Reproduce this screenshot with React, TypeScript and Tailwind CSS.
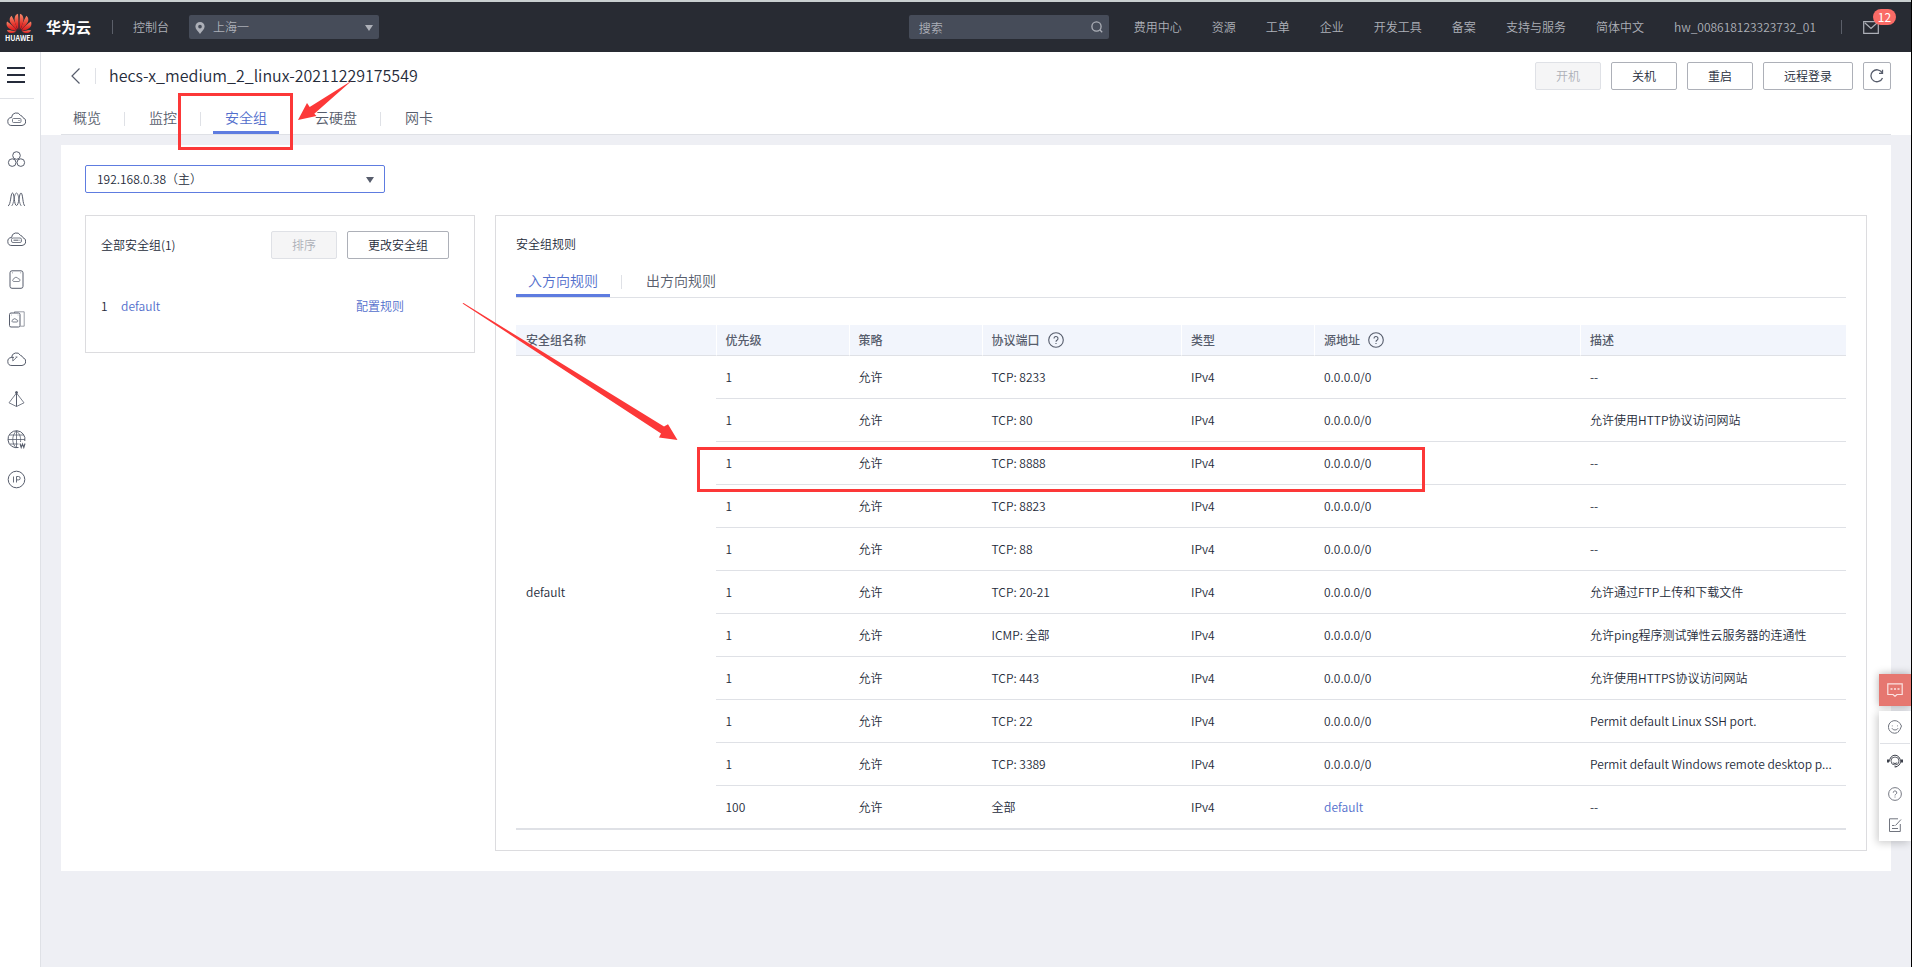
import { useState } from 'react';
import type { ReactNode } from 'react';

interface Rule {
  priority: number;
  port: string;
  source: string;
  description: string;
}

const rules: Rule[] = [
  { priority: 1, port: 'TCP: 8233', source: '0.0.0.0/0', description: '--' },
  { priority: 1, port: 'TCP: 80', source: '0.0.0.0/0', description: '允许使用HTTP协议访问网站' },
  { priority: 1, port: 'TCP: 8888', source: '0.0.0.0/0', description: '--' },
  { priority: 1, port: 'TCP: 8823', source: '0.0.0.0/0', description: '--' },
  { priority: 1, port: 'TCP: 88', source: '0.0.0.0/0', description: '--' },
  { priority: 1, port: 'TCP: 20-21', source: '0.0.0.0/0', description: '允许通过FTP上传和下载文件' },
  { priority: 1, port: 'ICMP: 全部', source: '0.0.0.0/0', description: '允许ping程序测试弹性云服务器的连通性' },
  { priority: 1, port: 'TCP: 443', source: '0.0.0.0/0', description: '允许使用HTTPS协议访问网站' },
  { priority: 1, port: 'TCP: 22', source: '0.0.0.0/0', description: 'Permit default Linux SSH port.' },
  { priority: 1, port: 'TCP: 3389', source: '0.0.0.0/0', description: 'Permit default Windows remote desktop p...' },
  { priority: 100, port: '全部', source: 'default', description: '--' },
];

const navLinks = ['费用中心', '资源', '工单', '企业', '开发工具', '备案', '支持与服务', '简体中文', 'hw_008618123323732_01'];
const pageTabs = ['概览', '监控', '安全组', '云硬盘', '网卡'];
const ruleTabs = ['入方向规则', '出方向规则'];

const cloudPath = 'M5 15.5a4 4 0 0 1-.4-8 4.7 4.7 0 0 1 8.8-2.2 3.8 3.8 0 0 1 2.6 2.4 4 4 0 0 1-1 7.8z';

const services: { name: string; icon: ReactNode }[] = [
  {
    name: '弹性云服务器',
    icon: (
      <>
        <path d={cloudPath} />
        <rect x="5.5" y="8.5" width="8.5" height="4" rx="1" strokeWidth="0.8" />
        <path d="M11.5 10.5h1" />
      </>
    ),
  },
  {
    name: '弹性伸缩',
    icon: (
      <>
        <circle cx="9.5" cy="5.5" r="3.8" />
        <circle cx="5.2" cy="12.6" r="3.8" />
        <circle cx="13.8" cy="12.6" r="3.8" />
      </>
    ),
  },
  {
    name: '镜像服务',
    icon: (
      <>
        <path d="M1 16c3-1 2.5-13 4.5-13S7 15.5 9.5 15.5 12 3 14 3s1.5 12 4 13" />
        <path d="M4.5 16C7 15 7 3 9.5 3s2.5 12 5 13" strokeWidth="0.8" />
      </>
    ),
  },
  {
    name: '裸金属服务器',
    icon: (
      <>
        <path d={cloudPath} />
        <rect x="4.5" y="8" width="10" height="4.5" rx="1.5" strokeWidth="0.8" />
        <path d="M6.5 10.2h5M12.5 10.2h.8" />
      </>
    ),
  },
  {
    name: '云硬盘',
    icon: (
      <>
        <rect x="3" y="0.8" width="13" height="17.5" rx="2" />
        <path d="M6.5 11.5a1.3 1.3 0 0 1 .3-2.5 2.3 2.3 0 0 1 4.4-.2 1.4 1.4 0 0 1 .8 2.7z" strokeWidth="0.7" />
        <path d="M5 2.8h.6M13.5 2.8h.6" />
      </>
    ),
  },
  {
    name: '专属存储',
    icon: (
      <>
        <rect x="2.5" y="3" width="10.5" height="14" rx="1.5" />
        <path d="M7.5 3V1.8h9.7v14.4h-4" strokeWidth="0.6" />
        <path d="M5.5 12a1.1 1.1 0 0 1 .3-2 2 2 0 0 1 3.7-.1 1.1 1.1 0 0 1 .6 2.1zM4.3 5h.5M10.8 5h.5" strokeWidth="0.8" />
      </>
    ),
  },
  {
    name: '云备份',
    icon: (
      <>
        <path d={cloudPath} />
        <path d="M5.8 6.5V11l4-3.8M4.5 7.5h2.5M8.5 7h2" strokeWidth="0.8" />
      </>
    ),
  },
  {
    name: '弹性负载均衡',
    icon: (
      <>
        <path d="M9.5 3 2 12.8l7.5 3.7 7.5-3.7z" strokeWidth="0.8" />
        <path d="M9.5 3v13.5" />
        <circle cx="9.5" cy="2.5" r="1" fill="currentColor" />
      </>
    ),
  },
  {
    name: '域名注册',
    icon: (
      <>
        <path d="M11.5 17.5A8.5 8.5 0 1 1 17.8 11" />
        <path d="M9.5 1c-5 4-5 13 0 17M9.5 1c3.5 3 4.5 6.5 4 11M9.5 1v17M2.5 5h14M1 9.5h17M2.5 14h9" strokeWidth="0.8" />
        <path d="m13 13.5 1.2 4 1.3-3.5 1.3 3.5 1.2-4" strokeWidth="1.1" />
      </>
    ),
  },
  {
    name: '弹性公网IP',
    icon: (
      <>
        <circle cx="9.5" cy="9.5" r="8.3" />
        <path d="M6.5 6.5v6M9.5 12.5v-6h2a1.7 1.7 0 0 1 0 3.4h-2" strokeWidth="0.9" />
      </>
    ),
  },
];

function Triangle({ className }: { className: string }) {
  return (
    <svg viewBox="0 0 8 6" className={`pointer-events-none absolute h-[6px] w-[8px] ${className}`} fill="currentColor">
      <path d="M0 0h8L4 6z" />
    </svg>
  );
}

function HelpIcon({ size = 'h-4 w-4' }: { size?: string }) {
  return (
    <svg viewBox="0 0 16 16" className={`${size} shrink-0`} fill="none" stroke="currentColor" strokeWidth="1.1">
      <circle cx="8" cy="8" r="7.3" />
      <path d="M6 6.5a2 2 0 1 1 3 1.7c-.7.4-1 .7-1 1.5M8 10.9V12" />
    </svg>
  );
}

function HuaweiLogo() {
  // four petals, mirrored around the vertical axis
  const petals = (
    <>
      <path d="M12.7 17.6C10 12.5 8 8 9.2 4.2 9.7 2.3 11 1.3 12.5.9c.5 5.5.6 11 .2 16.7z" />
      <path d="M11.7 17.9C8.2 14.5 3.5 10.5 3.7 6.7c.1-1.7 1-2.9 2.1-3.7 2.7 4.6 4.8 9.7 5.9 14.9z" />
      <path d="M11 18.7C6.5 18.3 2 16.5.8 13.3c-.6-1.6-.3-3.2.2-4.3 4 2.5 7.5 5.8 10 9.7z" />
      <path d="M10.5 19.6c-3 1.5-5.8 2-7.7.8-1-.6-1.6-1.5-2-2.4 3.2-.1 6.5.4 9.7 1.6z" />
    </>
  );
  return (
    <svg viewBox="0 0 27 22" className="h-[21px] w-[26px]">
      <defs>
        <linearGradient id="petal" x1="0" y1="0" x2="0" y2="1">
          <stop offset="0" stopColor="#f58a6c" />
          <stop offset="0.6" stopColor="#e5352d" />
          <stop offset="1" stopColor="#d8141c" />
        </linearGradient>
      </defs>
      <g fill="url(#petal)">
        {petals}
        <g transform="translate(27 0) scale(-1 1)">{petals}</g>
      </g>
    </svg>
  );
}

function TopBar() {
  return (
    <header className="flex h-[52px] items-center border-t-2 border-[#c9cfd0] bg-[#282b33] pl-[5px] pr-[32px] text-[#adb0b8]">
      <a href="#" aria-label="HUAWEI" className="flex flex-col items-center">
        <HuaweiLogo />
        <span className="text-[7px] font-bold leading-[8px] text-white">HUAWEI</span>
      </a>
      <a href="#" className="ml-[13px] text-[15px] font-bold text-white">华为云</a>
      <span className="ml-[21px] h-[14px] w-px bg-[#5b5f69]" />
      <a href="#" className="ml-5">控制台</a>
      <div className="relative ml-5 w-[190px]">
        <svg viewBox="0 0 10 13" className="pointer-events-none absolute left-[6px] top-[7px] h-[12px] w-[10px]" fill="currentColor">
          <path fillRule="evenodd" d="M5 0a5 5 0 0 1 5 5c0 3-3 5-5 8-2-3-5-5-5-8a5 5 0 0 1 5-5zm0 3a2 2 0 1 0 0 4 2 2 0 0 0 0-4z" />
        </svg>
        <select aria-label="区域" className="h-6 w-full appearance-none rounded-xs bg-[#464c59] pl-6">
          <option>上海一</option>
        </select>
        <Triangle className="right-[6px] top-[10px]" />
      </div>
      <div className="relative ml-auto w-[200px]">
        <input type="text" aria-label="搜索" placeholder="搜索" className="h-6 w-full rounded-xs bg-[#464c59] px-[10px] placeholder:text-[#adb0b8]" />
        <svg viewBox="0 0 12 12" className="pointer-events-none absolute right-[6px] top-[6px] h-3 w-3" fill="none" stroke="currentColor" strokeWidth="1.3">
          <circle cx="5.5" cy="5.5" r="4.6" />
          <path d="m9 9 2.2 2.2" />
        </svg>
      </div>
      <nav className="ml-[25px] flex gap-[30px]">
        {navLinks.map((link) => (
          <a key={link} href="#">{link}</a>
        ))}
      </nav>
      <span className="ml-[25px] h-[14px] w-px bg-[#5b5f69]" />
      <button aria-label="消息" className="relative ml-[21px]">
        <svg viewBox="0 0 16 13" className="h-[13px] w-4" fill="none" stroke="currentColor" strokeWidth="1.2">
          <path d="M.7.7h14.6v11.6H.7zM2 2l6 5.5L14 2" />
        </svg>
        <span className="absolute -top-[12px] left-[10px] h-4 w-[23px] rounded-full bg-[#fa6b66] text-center font-normal leading-4 text-white">12</span>
      </button>
    </header>
  );
}

function SideBar() {
  return (
    <aside className="flex w-[41px] shrink-0 flex-col border-r border-[#dfe1e6] bg-white">
      <button aria-label="菜单" className="mr-[6px] flex h-[47px] flex-col justify-center gap-[5px] border-b border-[#dfe1e6] pl-[7px]">
        <span className="h-[2px] w-[18px] bg-[#252b3a]" />
        <span className="h-[2px] w-[18px] bg-[#252b3a]" />
        <span className="h-[2px] w-[18px] bg-[#252b3a]" />
      </button>
      {services.map((service) => (
        <a key={service.name} href="#" title={service.name} className="flex h-10 items-center pl-[7px] text-[#575d6c]">
          <svg viewBox="0 0 19 19" className="h-[19px] w-[19px]" fill="none" stroke="currentColor" strokeWidth="1">
            {service.icon}
          </svg>
        </a>
      ))}
    </aside>
  );
}

function Button({ children, disabled = false }: { children: ReactNode; disabled?: boolean }) {
  return (
    <button
      disabled={disabled}
      className="h-7 rounded-xs border border-[#adb0b8] bg-white px-5 text-[#252b3a] disabled:border-[#dfe1e6] disabled:bg-[#f5f5f6] disabled:text-[#adb0b8]"
    >
      {children}
    </button>
  );
}

interface TabsProps {
  tabs: string[];
  active: string;
  onChange: (tab: string) => void;
}

function Tabs({ tabs, active, onChange }: TabsProps) {
  return (
    <div role="tablist" className="flex border-b border-[#dfe1e6] text-sm">
      {tabs.map((tab, i) => (
        <div key={tab} className="flex">
          {i > 0 && <span className="mx-[11px] mt-[5px] h-[14px] w-[2px] border-l border-[#dfe1e6]" />}
          <button
            role="tab"
            aria-selected={tab === active}
            onClick={() => onChange(tab)}
            className="border-b-3 border-transparent px-3 pb-1 text-[#575d6c] aria-selected:border-[#5e7ce0] aria-selected:text-[#526ecc]"
          >
            {tab}
          </button>
        </div>
      ))}
    </div>
  );
}

function GroupPanel() {
  return (
    <section className="h-[138px] w-[390px] shrink-0 border border-[#dcdcdf] px-[15px] pt-[15px]">
      <div className="flex items-center gap-[10px] pr-[10px]">
        <h2 className="mr-auto">全部安全组(1)</h2>
        <Button disabled>排序</Button>
        <Button>更改安全组</Button>
      </div>
      <div className="mt-[39px] flex">
        <span className="w-5">1</span>
        <a href="#" className="w-[235px] text-[#526ecc]">default</a>
        <a href="#" className="text-[#526ecc]">配置规则</a>
      </div>
    </section>
  );
}

function HeadCell({ width, children }: { width: string; children: ReactNode }) {
  return (
    <th className={`${width} h-[31px] border-b border-l border-b-[#dfe1e6] border-l-white px-[9px] text-left font-medium first:border-l-0 first:pl-[10px]`}>
      <div className="flex items-center gap-2">{children}</div>
    </th>
  );
}

function RulesPanel() {
  const [tab, setTab] = useState(ruleTabs[0]);

  return (
    <section className="min-w-0 grow border border-[#dcdcdf] p-5">
      <h2 className="mb-[18px]">安全组规则</h2>
      <Tabs tabs={ruleTabs} active={tab} onChange={setTab} />
      <table className="mt-[27px] w-full table-fixed border-separate border-spacing-0 border-b border-[#dfe1e6]">
        <thead className="bg-[#f2f5fc] text-[#575d6c]">
          <tr>
            <HeadCell width="w-[15%]">安全组名称</HeadCell>
            <HeadCell width="w-[10%]">优先级</HeadCell>
            <HeadCell width="w-[10%]">策略</HeadCell>
            <HeadCell width="w-[15%]">协议端口 <HelpIcon /></HeadCell>
            <HeadCell width="w-[10%]">类型</HeadCell>
            <HeadCell width="w-[20%]">源地址 <HelpIcon /></HeadCell>
            <HeadCell width="w-[20%]">描述</HeadCell>
          </tr>
        </thead>
        <tbody>
          {rules.map((rule, i) => (
            <tr key={rule.port} className="h-[43px] *:border-b *:border-[#dfe1e6] *:px-[10px]">
              {i === 0 && <td rowSpan={rules.length}>default</td>}
              <td>{rule.priority}</td>
              <td>允许</td>
              <td>{rule.port}</td>
              <td>IPv4</td>
              <td>{rule.source === 'default' ? <a href="#" className="text-[#526ecc]">default</a> : rule.source}</td>
              <td className="whitespace-nowrap">{rule.description}</td>
            </tr>
          ))}
        </tbody>
      </table>
    </section>
  );
}

function FloatingTools() {
  return (
    <div className="absolute right-0 top-[674px] w-8 text-[#71757f]">
      <button aria-label="咨询" className="flex h-8 w-8 items-center justify-center bg-[#e67770] text-[#fbe3e1] shadow-[0_0_8px_rgba(0,0,0,0.3)]">
        <svg viewBox="0 0 16 14" className="h-[14px] w-4" fill="none" stroke="currentColor" strokeWidth="1.2">
          <path d="M.8.8h14.4v10.7H10L8 13.3 6 11.500H.8z" />
          <path d="M3.5 6h2M7 6h2M10.5 6h2" strokeWidth="1.5" />
        </svg>
      </button>
      <div className="mt-[5px] flex h-[130px] flex-col items-center bg-white shadow-[-2px_2px_8px_rgba(0,0,0,0.2)]">
        <button aria-label="评价" className="flex h-[33px] w-[30px] items-center justify-center border-b border-[#dfe1e6]">
          <svg viewBox="0 0 14 14" className="h-[14px] w-[14px]" fill="none" stroke="currentColor" strokeWidth="1">
            <path d="M9 12.8A6.3 6.3 0 1 1 12 3.5L13.5 6 12 9.5l-2.5 3.3" />
            <path d="M4 8.3c1 2.2 5 2.2 6 0M4.3 5.5v.8M9.5 5.5v.8" />
          </svg>
        </button>
        <button aria-label="客服" className="flex h-[34px] items-center">
          <svg viewBox="0 0 16 14" className="h-[14px] w-4" fill="none" stroke="#3d414b" strokeWidth="1">
            <path d="M2.5 7.5a5.5 6.3 0 0 1 11 0c0 3-2.5 5-5 5.3" />
            <circle cx="8" cy="7" r="4" strokeWidth="0.8" />
            <path d="M1 5.5v3M15 5.5v3" strokeWidth="2" />
            <path d="M5.8 8.5c1 1.3 3.4 1.3 4.4 0M7.5 12.8h2" />
          </svg>
        </button>
        <button aria-label="帮助" className="flex h-[31px] items-center"><HelpIcon size="h-[14px] w-[14px]" /></button>
        <button aria-label="反馈" className="flex h-8 items-center">
          <svg viewBox="0 0 14 14" className="h-[14px] w-[14px]" fill="none" stroke="currentColor" strokeWidth="1">
            <path d="M10 .8H1.5v12.7h10.8V6M4 10.5h6M4 7.5h2.5M7.5 7.500l5.5-6" />
          </svg>
        </button>
      </div>
    </div>
  );
}

// Red boxes and arrows that point at the tab and at the port 8888 rule
function Annotations() {
  return (
    <svg width="1430" height="500" className="pointer-events-none absolute left-0 top-0" fill="#fc3838">
      <rect x="179.5" y="94.5" width="112" height="54" fill="none" stroke="#fc3838" strokeWidth="3" />
      <path d="M352 80.5 309.7 107 307 103l-9 17 18.5-4-2.2-2.3z" />
      <rect x="698.5" y="448.5" width="725" height="42" fill="none" stroke="#fc3838" strokeWidth="3" />
      <path d="M462.5 303.5 463.5 303 664 426.5l4-2.2 9.5 15.7-18.5-2.5 2-4z" />
    </svg>
  );
}

export default function App() {
  const [tab, setTab] = useState('安全组');

  return (
    <div className="relative flex min-h-screen flex-col border-r border-black bg-[#eeeff4] font-['Noto_Sans_CJK_SC',sans-serif] text-xs font-[350] text-[#252b3a]">
      <TopBar />
      <div className="flex grow">
        <SideBar />
        <main className="min-w-0 grow">
          <div className="bg-white px-5">
            <div className="flex items-center gap-[10px] pb-[17px] pt-[10px]">
              <button aria-label="返回" className="pl-[10px]">
                <svg viewBox="0 0 9 16" className="h-4 w-[9px]" fill="none" stroke="#575d6c" strokeWidth="1.2">
                  <path d="M8.5.5 1 8l7.5 7.5" />
                </svg>
              </button>
              <span className="ml-[5px] h-4 w-px bg-[#dfe1e6]" />
              <h1 className="mr-auto pb-[2px] pl-[3px] text-base leading-6">hecs-x_medium_2_linux-20211229175549</h1>
              <Button disabled>开机</Button>
              <Button>关机</Button>
              <Button>重启</Button>
              <Button>远程登录</Button>
              <button aria-label="刷新" className="flex h-7 w-7 items-center justify-center rounded-xs border border-[#adb0b8]">
                <svg viewBox="0 0 14 14" className="h-[14px] w-[14px]" fill="none" stroke="#575d6c" strokeWidth="1.3">
                  <path d="M12.5 9A6 6 0 1 1 12 3.5M12.5.8V4.3H9" />
                </svg>
              </button>
            </div>
            <Tabs tabs={pageTabs} active={tab} onChange={setTab} />
          </div>
          <div className="mx-5 mt-[10px] bg-white px-6 py-5">
            <div className="relative w-[300px]">
              <select aria-label="IP地址" className="h-7 w-full appearance-none rounded-xs border border-[#5e7ce0] bg-white px-[11px]">
                <option>192.168.0.38（主）</option>
              </select>
              <Triangle className="right-[11px] top-[12px] text-[#575d6c]" />
            </div>
            <div className="mt-[22px] flex items-start gap-5">
              <GroupPanel />
              <RulesPanel />
            </div>
          </div>
        </main>
      </div>
      <FloatingTools />
      <Annotations />
    </div>
  );
}
